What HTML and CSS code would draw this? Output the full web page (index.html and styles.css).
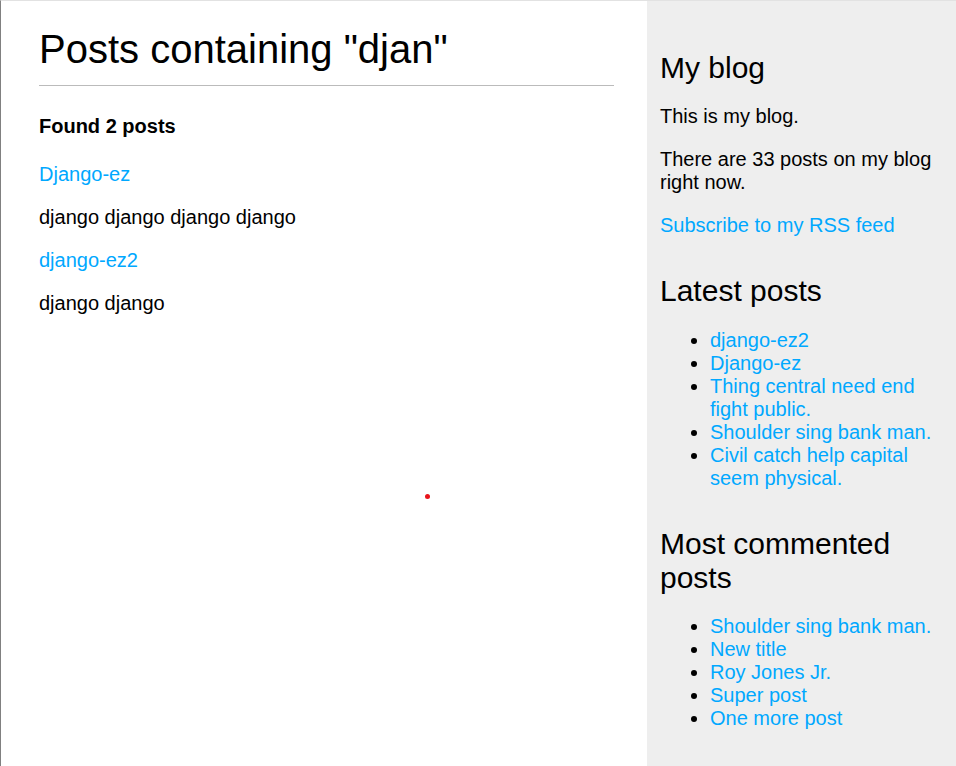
FILE: index.html
```html
<!DOCTYPE html>
<html lang="en">
<head>
<meta charset="utf-8">
<title>Posts containing "djan"</title>
<link rel="stylesheet" href="styles.css">
</head>
<body>
<div class="page">
  <main class="main">
    <h1 class="title">Posts containing "djan"</h1>
    <h3 class="found">Found 2 posts</h3>
    <p><a href="#">Django-ez</a></p>
    <p>django django django django</p>
    <p><a href="#">django-ez2</a></p>
    <p>django django</p>
  </main>
  <aside class="sidebar">
    <h2>My blog</h2>
    <p>This is my blog.</p>
    <p>There are 33 posts on my blog right now.</p>
    <p><a href="#">Subscribe to my RSS feed</a></p>
    <h2>Latest posts</h2>
    <ul>
      <li><a href="#">django-ez2</a></li>
      <li><a href="#">Django-ez</a></li>
      <li><a href="#">Thing central need end fight public.</a></li>
      <li><a href="#">Shoulder sing bank man.</a></li>
      <li><a href="#">Civil catch help capital seem physical.</a></li>
    </ul>
    <h2>Most commented posts</h2>
    <ul class="last-list">
      <li><a href="#">Shoulder sing bank man.</a></li>
      <li><a href="#">New title</a></li>
      <li><a href="#">Roy Jones Jr.</a></li>
      <li><a href="#">Super post</a></li>
      <li><a href="#">One more post</a></li>
    </ul>
  </aside>
  <span class="dot"></span>
</div>
</body>
</html>
```
FILE: styles.css
```css
html, body {
  margin: 0;
  padding: 0;
}
body {
  font-family: "Liberation Sans", Arial, sans-serif;
  font-size: 20px;
  color: #000;
  background: #fff;
}
a {
  color: #00a8ff;
  text-decoration: none;
}
.page {
  position: relative;
  display: flex;
  min-height: 100vh;
  box-sizing: border-box;
  border-top: 1px solid #e2e2e2;
  border-left: 1px solid #808080;
}
.main {
  width: 575px;
  padding: 26px 33px 0 38px;
}
.title {
  font-size: 40px;
  font-weight: normal;
  margin: 0;
  padding-bottom: 13px;
  border-bottom: 1px solid #bbb;
}
.found {
  font-size: 20px;
  font-weight: bold;
  margin: 29px 0 25px;
}
p {
  margin: 20px 0;
}
.sidebar {
  flex: 1;
  background: #eee;
  padding: 13px 13px 0 13px;
}
.sidebar h2 {
  font-size: 30px;
  font-weight: normal;
  margin: 37px 0 20px;
}
.sidebar ul {
  margin: 21px 0 20px;
  padding-left: 50px;
}
.sidebar .last-list {
  margin-top: 20px;
}
.dot {
  position: absolute;
  left: 424px;
  top: 493px;
  width: 5px;
  height: 5px;
  border-radius: 50%;
  background: #e8141b;
}
```
